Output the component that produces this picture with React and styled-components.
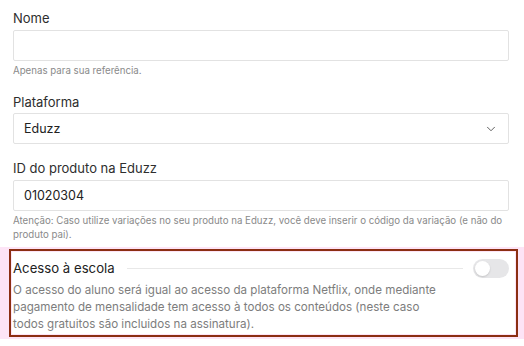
import React from "react";
import styled, { createGlobalStyle } from "styled-components";
import { ChevronDown } from "lucide-react";

const GlobalStyle = createGlobalStyle`
  * { box-sizing: border-box; }
  body {
    margin: 0;
    background: #fff;
    font-family: Inter, "Noto Sans", sans-serif;
    color: #2b2b2b;
  }
`;

const Page = styled.div`
  width: 524px;
  padding: 10px 15px 0 13px;
`;

const Field = styled.div`
  display: flex;
  flex-direction: column;
  margin-bottom: ${(p) => p.$mb ?? 16}px;
`;

const Label = styled.label`
  font-size: 13px;
  line-height: 16px;
  color: #2e2e2e;
  margin-bottom: ${(p) => p.$gap ?? 4}px;
`;

const Input = styled.div`
  height: 31px;
  border: 1px solid #e2e2e2;
  border-radius: 2px;
  padding: 0 10px;
  display: flex;
  align-items: center;
  justify-content: space-between;
  font-size: 12.5px;
  color: #222;
  & > svg {
    color: #555;
  }
`;

const Help = styled.p`
  margin: 3px 0 0;
  font-size: 9.7px;
  line-height: 14px;
  color: #8a8a8a;
`;

const Highlight = styled.div`
  margin: 5px -15px 0 -13px;
  padding: 2px 6px 2px 9px;
  background: #fde4f6;
`;

const Frame = styled.div`
  border: 2px solid #8b2e12;
  padding: 1px;
`;

const Panel = styled.div`
  background: #fff;
  padding: 7px 6px 1px 1px;
`;

const TitleRow = styled.div`
  display: flex;
  align-items: center;
  height: 18px;
`;

const Title = styled.span`
  font-size: 13.2px;
  color: #222;
`;

const Rule = styled.span`
  flex: 1;
  height: 1px;
  background: #e8e8e8;
  margin: 0 10px 0 12px;
`;

const Toggle = styled.span`
  width: 36px;
  height: 19px;
  border-radius: 10px;
  background: #e6e6e8;
  position: relative;
  &::after {
    content: "";
    position: absolute;
    left: 2px;
    top: 2px;
    width: 15px;
    height: 15px;
    border-radius: 50%;
    background: #fff;
    box-shadow: 0 1px 2px rgba(0, 0, 0, 0.15);
  }
`;

const Description = styled.p`
  margin: 5px 0 0;
  max-width: 440px;
  font-size: 11.6px;
  line-height: 17px;
  color: #7d7d7d;
`;

export default function App() {
  return (
    <>
      <GlobalStyle />
      <Page>
        <Field>
          <Label>Nome</Label>
          <Input />
          <Help>Apenas para sua referência.</Help>
        </Field>
        <Field>
          <Label $gap={3}>Plataforma</Label>
          <Input>
            Eduzz
            <ChevronDown size={14} strokeWidth={1.6} />
          </Input>
        </Field>
        <Field $mb={0}>
          <Label>ID do produto na Eduzz</Label>
          <Input>01020304</Input>
          <Help>
            Atenção: Caso utilize variações no seu produto na Eduzz, você deve inserir o código da
            variação (e não do produto pai).
          </Help>
        </Field>
        <Highlight>
          <Frame>
            <Panel>
              <TitleRow>
                <Title>Acesso à escola</Title>
                <Rule />
                <Toggle />
              </TitleRow>
              <Description>
                O acesso do aluno será igual ao acesso da plataforma Netflix, onde mediante
                pagamento de mensalidade tem acesso à todos os conteúdos (neste caso todos
                gratuitos são incluidos na assinatura).
              </Description>
            </Panel>
          </Frame>
        </Highlight>
      </Page>
    </>
  );
}
